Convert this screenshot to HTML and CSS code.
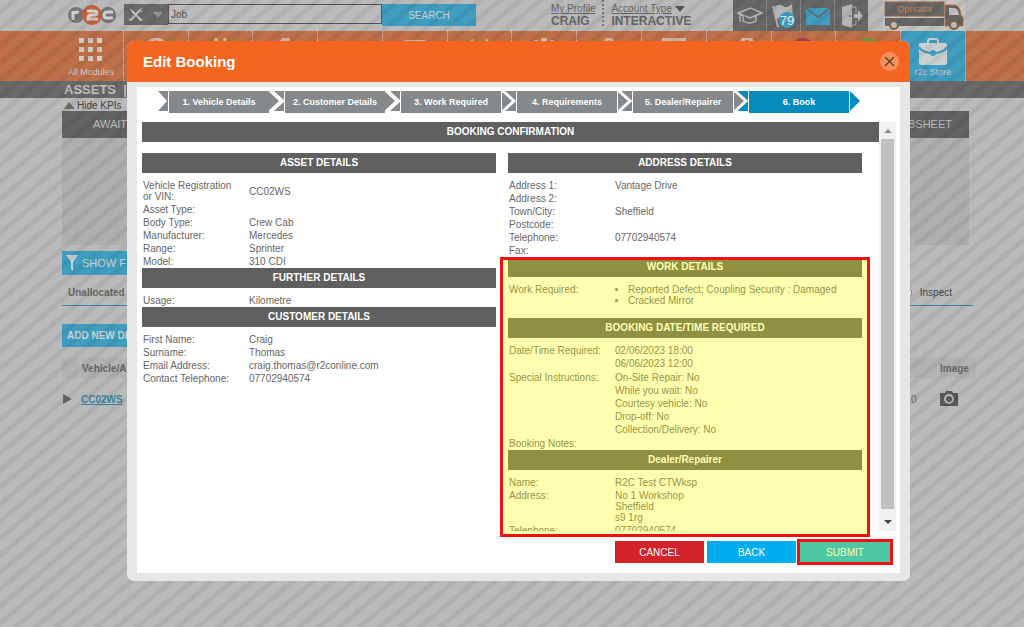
FILE: index.html
```html
<!DOCTYPE html>
<html lang="en">
<head>
  <meta charset="UTF-8">
  <meta name="viewport" content="width=device-width, initial-scale=1.0">
  <title>Edit Booking</title>
  <link rel="stylesheet" href="styles.css">
</head>
<body>

  <div class="page">
    <header class="topbar">
      <svg class="logo" width="50" height="20" viewBox="0 0 50 20">
        <circle cx="9" cy="10" r="8" fill="#777"/>
        <circle cx="41" cy="10" r="8" fill="#777"/>
        <circle cx="25" cy="10" r="10" fill="#c4623c"/>
        <g fill="none" stroke="#d0d0d0" stroke-width="3">
          <path d="M6 15V6M6 10q1-3 6-3"/>
          <path d="M20 6h7q3 0 3 2t-3 2h-3q-3 0-3 3v1h10"/>
          <path d="M46 7h-6q-3 0-3 3t3 3h6"/>
        </g>
      </svg>
      <div class="search">
        <button class="tool-btn" aria-label="Search type">
          <svg width="44" height="21" viewBox="0 0 44 21">
            <g fill="none" stroke="#c4c4c4">
              <path d="M8 7l9 9" stroke-width="2"/>
              <path d="M16 6l-9 10" stroke-width="2"/>
              <path d="M6 5l3 3M18 4l-3 3 2 1 2-2M6 14l-1 2 2 1 2-2M15 15l2 2 2-2"/>
            </g>
            <path d="M29 8h10l-5 6z" fill="#999"/>
          </svg>
        </button>
        <input class="search-input" type="text" value="Job" aria-label="Search">
        <button class="search-btn">SEARCH</button>
      </div>
      <div class="account">
        <div class="account-item">
          <a href="#">My Profile</a>
          <strong>CRAIG</strong>
        </div>
        <div class="account-item type">
          <span><a href="#">Account Type</a> <svg width="10" height="6" viewBox="0 0 10 6"><path d="M0 0h10L5 6z" fill="#555"/></svg></span>
          <strong>INTERACTIVE</strong>
        </div>
      </div>
      <nav class="shortcuts">
        <a href="#" aria-label="Training">
          <svg width="26" height="18" viewBox="0 0 26 18" fill="none" stroke="#b5b5b5" stroke-width="1.5">
            <path d="M1 6l13-5 11 5-12 5zM6 9v5q6 4 13 0V9M3 7v8"/>
          </svg>
        </a>
        <a href="#" aria-label="Notifications">
          <svg width="24" height="26" viewBox="0 0 24 26">
            <path d="M1 3l5 21" stroke="#b5b5b5" stroke-width="2"/>
            <path d="M2 4q5-4 9-1t9-2l1 14q-6 3-9 1t-7 0z" fill="#b5b5b5"/>
            <circle cx="15" cy="17" r="8" fill="#3f9dc0"/>
            <text x="15" y="22" text-anchor="middle" font-size="13" fill="#eee">79</text>
          </svg>
        </a>
        <a href="#" aria-label="Messages">
          <svg width="24" height="18" viewBox="0 0 24 18">
            <path d="M0 1h24v17H0z" fill="#3f9dc0"/>
            <path d="M0 1l12 9L24 1" fill="none" stroke="#676767" stroke-width="1.5"/>
          </svg>
        </a>
        <a href="#" aria-label="Log out">
          <svg width="22" height="24" viewBox="0 0 22 24">
            <path d="M1 3l10-3v24L1 21z" fill="#b5b5b5"/>
            <path d="M11 3h4v6M15 16v5h-4" fill="none" stroke="#b5b5b5"/>
            <path d="M13 10h4V6l5 6-5 6v-4h-4z" fill="#b5b5b5"/>
            <circle cx="9" cy="12" r="1" fill="#666"/>
          </svg>
        </a>
      </nav>
      <svg class="truck" width="82" height="31" viewBox="0 0 82 31">
        <path d="M0 0h82v31H0z" fill="#c6c3c0"/>
        <path d="M2 2h59v14H2zM2 18h59v8H2z" fill="#666"/>
        <path d="M2 2h59v14H2z" fill="none" stroke="#9a6444"/>
        <path d="M62 26V5h10q5 1 6 10l2 3v8z" fill="#666" stroke="#b06a45"/>
        <path d="M66 8h6q3 1 4 7H66z" fill="#c6c3c0"/>
        <g fill="#c6c3c0" stroke="#80604f" stroke-width="2">
          <circle cx="11" cy="25" r="4"/>
          <circle cx="71" cy="25" r="4"/>
        </g>
        <text x="32" y="12" text-anchor="middle" font-size="9" fill="#d0804f">Operator</text>
      </svg>
    </header>

    <nav class="modules">
      <a href="#" class="module">
        <svg width="24" height="24" viewBox="0 0 24 24" fill="#d2cbc6">
          <path d="M0 0h5v5H0zM9 0h5v5H9zM18 0h5v5h-5zM0 9h5v5H0zM9 9h5v5H9zM18 9h5v5h-5zM0 18h5v5H0zM9 18h5v5H9zM18 18h5v5h-5z"/>
        </svg>
        <span>All Modules</span>
      </a>
      <a href="#" class="module" aria-label="Dashboard"><svg width="24" height="24" viewBox="0 0 24 24"><circle cx="12" cy="12" r="11" fill="none" stroke="#cdb5a8" stroke-width="3"/></svg></a>
      <a href="#" class="module" aria-label="Connections"><svg width="24" height="24" viewBox="0 0 24 24"><path d="M8 0v12h9V0" fill="none" stroke="#cdb5a8" stroke-width="3"/></svg></a>
      <a href="#" class="module" aria-label="Fuel"><svg width="24" height="24" viewBox="0 0 24 24"><path d="M7 3q2-4 5-3h5v6l-7 6z" fill="#cdb5a8"/></svg></a>
      <a href="#" class="module" aria-label="Reports"><svg width="24" height="24" viewBox="0 0 24 24"><path d="M4 3h9v20H4z" fill="#cdb5a8"/></svg></a>
      <a href="#" class="module" aria-label="Vehicles"><svg width="24" height="24" viewBox="0 0 24 24"><rect x="1" y="2" width="22" height="16" rx="2" fill="#cdb5a8"/></svg></a>
      <a href="#" class="module" aria-label="Maintenance"><svg width="24" height="24" viewBox="0 0 24 24"><path d="M3 2l16 18M20 2L4 20" stroke="#cdb5a8" stroke-width="4"/></svg></a>
      <a href="#" class="module" aria-label="Engine"><svg width="24" height="24" viewBox="0 0 24 24"><path d="M2 2h4v2h3V0h6v4h3V2h4v18H2z" fill="#cdb5a8"/></svg></a>
      <a href="#" class="module" aria-label="Location"><svg width="24" height="24" viewBox="0 0 24 24"><circle cx="12" cy="5" r="4" fill="none" stroke="#cdb5a8" stroke-width="3"/></svg></a>
      <a href="#" class="module" aria-label="Documents"><svg width="24" height="24" viewBox="0 0 24 24"><path d="M0 0h24v8h-4v12H5V6H0z" fill="#cdb5a8"/></svg></a>
      <a href="#" class="module" aria-label="Users"><svg width="36" height="24" viewBox="0 0 36 24"><circle cx="26" cy="5" r="7" fill="#cdb5a8"/><path d="M4 5q8-4 14 0v14H4z" fill="#c09a86"/><circle cx="26" cy="5" r="3" fill="#aa765c"/></svg></a>
      <a href="#" class="module" aria-label="Alerts"><svg width="24" height="24" viewBox="0 0 24 24"><circle cx="12" cy="12" r="12" fill="#a64040"/></svg></a>
      <a href="#" class="module" aria-label="Approvals"><svg width="24" height="24" viewBox="0 0 24 24"><circle cx="12" cy="12" r="12" fill="#52a04e"/></svg></a>
      <a href="#" class="module store">
        <svg width="28" height="28" viewBox="0 0 28 28">
          <path d="M9 6V3q0-2 2-2h6q2 0 2 2v3" fill="none" stroke="#cdd0d0" stroke-width="2"/>
          <rect y="5" width="28" height="22" rx="2" fill="#cdd0d0"/>
          <path d="M0 9q3 6 14 6t14-6" fill="none" stroke="#3f9dc0" stroke-width="2"/>
          <circle cx="14" cy="15" r="3" fill="#3f9dc0"/>
        </svg>
        <span>r2c Store</span>
      </a>
    </nav>

    <h1 class="page-title">ASSETS &nbsp;|</h1>

    <main class="assets">
      <a href="#" class="hide-kpis"><svg width="11" height="7" viewBox="0 0 11 7"><path d="M0 7L5 0l6 7z" fill="#6c6c6c"/></svg> Hide KPIs</a>
      <section class="kpis">
        <div class="kpi-head"><span>AWAITING</span><span>JOBSHEET</span></div>
      </section>
      <button class="blue-btn filter-btn">
        <svg width="12" height="16" viewBox="0 0 12 16"><path d="M0 0h12L7 7v9l-2-2V7z" fill="#c8d0d2"/></svg>
        SHOW FILTERS
      </button>
      <div class="tabs">
        <strong>Unallocated</strong>
        <label><input type="radio" name="view"> Inspect</label>
      </div>
      <button class="blue-btn add-btn">ADD NEW DEFECT</button>
      <table class="asset-table">
        <tr><th class="expand"></th><th class="vehicle">Vehicle/Asset</th><th class="count"></th><th class="image">Image</th></tr>
        <tr>
          <td><svg width="9" height="10" viewBox="0 0 9 10"><path d="M0 0l9 5-9 5z" fill="#666"/></svg></td>
          <td class="asset-link"><a href="#">CC02WS</a></td>
          <td class="count">0</td>
          <td>
            <svg width="18" height="16" viewBox="0 0 18 16">
              <path d="M0 2h5l1-2h6l1 2h5v13H0z" fill="#585858"/>
              <circle cx="9" cy="8" r="4" fill="none" stroke="#b5b5b5" stroke-width="2"/>
            </svg>
          </td>
        </tr>
      </table>
    </main>
  </div>

  <div class="overlay">
    <div class="modal" role="dialog" aria-labelledby="modal-title">
      <div class="modal-header">
        <h2 id="modal-title">Edit Booking</h2>
        <button class="close-btn" aria-label="Close">
          <svg width="11" height="11" viewBox="0 0 11 11"><path d="M1 1l9 9M10 1l-9 9" stroke="#5c3420" stroke-width="1.2"/></svg>
        </button>
      </div>
      <div class="modal-body">
        <div class="modal-panel">
          <ol class="steps">
            <li>
              <svg width="11" height="22" viewBox="0 0 11 22"><path d="M0 0h10v20H0l9-10z" fill="#86898b"/></svg>
              <span>1. Vehicle Details</span>
            </li>
            <li>
              <svg width="16" height="22" viewBox="0 0 16 22"><path d="M0 0h15v20H0z" fill="#86898b"/><path d="M1-1l12 11L1 21" fill="none" stroke="#fff" stroke-width="4"/></svg>
              <span>2. Customer Details</span>
            </li>
            <li>
              <svg width="16" height="22" viewBox="0 0 16 22"><path d="M0 0h15v20H0z" fill="#86898b"/><path d="M1-1l12 11L1 21" fill="none" stroke="#fff" stroke-width="4"/></svg>
              <span>3. Work Required</span>
            </li>
            <li>
              <svg width="16" height="22" viewBox="0 0 16 22"><path d="M1 0h14v20H1z" fill="#86898b"/><path d="M1-1l12 11L1 21" fill="none" stroke="#fff" stroke-width="3"/></svg>
              <span>4. Requirements</span>
            </li>
            <li>
              <svg width="16" height="22" viewBox="0 0 16 22"><path d="M1 0h14v20H1z" fill="#86898b"/><path d="M1-1l12 11L1 21" fill="none" stroke="#fff" stroke-width="3"/></svg>
              <span>5. Dealer/Repairer</span>
            </li>
            <li class="current">
              <svg width="16" height="22" viewBox="0 0 16 22"><path d="M5 0h10v20H5z" fill="#068bbf"/><path d="M1 0l12 10L1 20z" fill="#86898b"/><path d="M1-1l12 11L1 21" fill="none" stroke="#fff" stroke-width="3"/></svg>
              <span>6. Book</span>
              <svg width="11" height="22" viewBox="0 0 11 22"><path d="M1 0l10 10L1 20z" fill="#068bbf"/></svg>
            </li>
          </ol>

          <div class="scroll-area">
            <div class="scroll-content">
              <h3 class="bar">BOOKING CONFIRMATION</h3>
              <div class="columns">
                <div class="column">
                  <h3 class="bar">ASSET DETAILS</h3>
                  <table class="details">
                    <tr><th>Vehicle Registration or VIN:</th><td class="middle">CC02WS</td></tr>
                    <tr><th>Asset Type:</th><td></td></tr>
                    <tr><th>Body Type:</th><td>Crew Cab</td></tr>
                    <tr><th>Manufacturer:</th><td>Mercedes</td></tr>
                    <tr><th>Range:</th><td>Sprinter</td></tr>
                    <tr><th>Model:</th><td>310 CDI</td></tr>
                  </table>
                  <h3 class="bar">FURTHER DETAILS</h3>
                  <table class="details">
                    <tr><th>Usage:</th><td>Kilometre</td></tr>
                  </table>
                  <h3 class="bar">CUSTOMER DETAILS</h3>
                  <table class="details">
                    <tr><th>First Name:</th><td>Craig</td></tr>
                    <tr><th>Surname:</th><td>Thomas</td></tr>
                    <tr><th>Email Address:</th><td>craig.thomas@r2conline.com</td></tr>
                    <tr><th>Contact Telephone:</th><td>07702940574</td></tr>
                  </table>
                </div>
                <div class="column">
                  <h3 class="bar">ADDRESS DETAILS</h3>
                  <table class="details">
                    <tr><th>Address 1:</th><td>Vantage Drive</td></tr>
                    <tr><th>Address 2:</th><td></td></tr>
                    <tr><th>Town/City:</th><td>Sheffield</td></tr>
                    <tr><th>Postcode:</th><td></td></tr>
                    <tr><th>Telephone:</th><td>07702940574</td></tr>
                    <tr><th>Fax:</th><td></td></tr>
                  </table>
                  <h3 class="bar">WORK DETAILS</h3>
                  <table class="details work">
                    <tr><th>Work Required:</th><td><ul><li>Reported Defect; Coupling Security : Damaged</li><li>Cracked Mirror</li></ul></td></tr>
                  </table>
                  <h3 class="bar">BOOKING DATE/TIME REQUIRED</h3>
                  <table class="details">
                    <tr><th>Date/Time Required:</th><td class="lines">02/06/2023 18:00<br>06/06/2023 12:00</td></tr>
                    <tr><th>Special Instructions:</th><td class="lines">On-Site Repair: No<br>While you wait: No<br>Courtesy vehicle: No<br>Drop-off: No<br>Collection/Delivery: No</td></tr>
                    <tr><th>Booking Notes:</th><td></td></tr>
                  </table>
                  <h3 class="bar">Dealer/Repairer</h3>
                  <table class="details">
                    <tr><th>Name:</th><td>R2C Test CTWksp</td></tr>
                    <tr><th>Address:</th><td>No 1 Workshop<br>Sheffield<br>s9 1rg</td></tr>
                    <tr><th>Telephone:</th><td>07702940574</td></tr>
                  </table>
                </div>
              </div>
            </div>
            <div class="scrollbar">
              <svg width="17" height="17" viewBox="0 0 17 17"><path d="M5 11l4-4 4 4z" fill="#8f8f8f"/></svg>
              <div class="thumb"></div>
              <svg width="17" height="17" viewBox="0 0 17 17"><path d="M5 6h8l-4 4z" fill="#444"/></svg>
            </div>
          </div>

          <div class="actions">
            <button class="cancel">CANCEL</button>
            <button>BACK</button>
            <div class="submit-wrap"><button>SUBMIT</button><div class="mark"></div></div>
          </div>
          <div class="mark details-mark"></div>
        </div>
      </div>
    </div>
  </div>

</body>
</html>
```
FILE: styles.css
```css
* { box-sizing: border-box; }
body {
  margin: 0;
  font-family: "Liberation Sans", Arial, sans-serif;
  font-size: 10px;
  color: #666;
  background-color: #bababa;
  overflow: hidden;
}
button, input { font-family: inherit; font-size: inherit; }
button { border: none; padding: 0; cursor: pointer; }
h1, h2, h3, ul, ol { margin: 0; padding: 0; }
svg { display: block; }
.page { min-height: 100vh; }

/* Top bar */
.topbar {
  display: flex;
  height: 31px;
  padding-right: 59px;
  padding-left: 67px;
}
.logo { margin-top: 5px; }
.search {
  display: flex;
  margin: 4px 75px 0 7px;
  height: 22px;
}
.tool-btn {
  width: 44px;
  height: 21px;
  background-color: #696969;
}
.search-input {
  width: 214px;
  height: 20px;
  padding: 0 2px;
  border: 1px solid #555;
  background-color: #bcbcbc;
  color: #555;
}
.search-btn {
  width: 94px;
  background-color: #3f9dc0;
  color: #c8d3d6;
}
.account { display: flex; flex: 1; }
.account-item { padding-top: 3px; line-height: 12px; }
.account-item span { display: flex; gap: 3px; align-items: center; }
.account-item a { color: #666; }
.account-item strong { display: block; font-size: 12px; }
.account-item.type {
  margin-left: 7px;
  padding-left: 7px;
  border-left: 2px dotted #777;
  height: 26px;
}
.shortcuts {
  display: flex;
  width: 135px;
  margin-right: 15px;
  background-color: #676767;
}
.shortcuts a {
  display: flex;
  flex: 1;
  align-items: center;
  justify-content: center;
}
.shortcuts a + a { border-left: 1px dotted #a0a0a0; }

/* Modules */
.modules {
  display: flex;
  height: 50px;
  padding: 0 58px 0 59px;
  background-color: #bd7049;
}
.module {
  display: flex;
  flex: 1;
  flex-direction: column;
  align-items: center;
  justify-content: space-between;
  padding: 7px 0 4px;
  border-right: 1px dotted #d8c4b8;
  color: #d2cbc6;
  font-size: 9px;
  text-decoration: none;
  white-space: nowrap;
}
.module.store { background-color: #3f9dc0; }

.page-title {
  height: 17px;
  padding-left: 64px;
  background-color: #696969;
  color: #c0c0c0;
  font-size: 13px;
  line-height: 17px;
}

/* Asset list */
.assets {
  display: flex;
  flex-direction: column;
  align-items: flex-start;
  padding: 0 48px 0 62px;
}
.hide-kpis {
  display: flex;
  gap: 2px;
  align-items: center;
  height: 13px;
  padding-top: 2px;
  padding-left: 2px;
  color: #444;
  text-decoration: none;
}
.kpis {
  width: calc(100% - 7px);
  height: 134px;
  background-color: #afafaf;
}
.kpi-head {
  display: flex;
  justify-content: space-between;
  padding: 0 17px 0 31px;
  background-color: #636363;
  color: #bbb;
  font-size: 11px;
  line-height: 27px;
}
.blue-btn {
  display: flex;
  align-items: center;
  width: 120px;
  background-color: #3f9dc0;
  color: #c8d3d6;
  font-weight: bold;
}
.filter-btn {
  gap: 4px;
  height: 24px;
  margin-top: 6px;
  padding-left: 4px;
  font-size: 11px;
  font-weight: normal;
}
.tabs {
  display: flex;
  align-items: center;
  justify-content: space-between;
  width: calc(100% - 3px);
  height: 31px;
  padding: 5px 21px 0 6px;
  border-bottom: 1px solid #2f86a8;
}
.tabs label { display: flex; gap: 8px; align-items: center; color: #444; }
.tabs input { width: 12px; height: 12px; margin: 0; }
.add-btn {
  height: 23px;
  margin-top: 18px;
  padding-left: 5px;
}
.asset-table {
  width: 100%;
  margin-top: 11px;
  border-spacing: 0;
}
.asset-table th {
  height: 20px;
  padding: 0 1px;
  background-color: #b2b2b2;
  border-right: 2px solid #bababa;
  text-align: left;
}
.asset-table td { height: 42px; padding: 0 1px; }
.asset-table .asset-link { padding: 0; }
.asset-table a { color: #3884a0; font-weight: bold; }
.asset-table .expand { width: 19px; }
.asset-table .image { width: 37px; border-right: none; }
.asset-table .count { width: 68px; padding-left: 40px; }

/* Dialog */
.overlay {
  position: absolute;
  inset: 0;
  padding: 41px 114px 46px 127px;
  background: repeating-linear-gradient(140deg, rgba(0, 0, 0, 0) 0, rgba(0, 0, 0, 0) 6px, rgba(0, 0, 0, 0.06) 8px, rgba(0, 0, 0, 0.06) 11px, rgba(0, 0, 0, 0) 13px);
}
.modal {
  display: flex;
  flex-direction: column;
  height: 100%;
  border-radius: 7px;
  background-color: #e7e7e8;
  overflow: hidden;
}
.modal-header {
  display: flex;
  align-items: center;
  justify-content: space-between;
  height: 41px;
  padding: 0 11px 0 16px;
  background-color: #f56522;
  color: #fff;
}
.modal-header h2 { font-size: 15px; }
.close-btn {
  display: flex;
  align-items: center;
  justify-content: center;
  width: 19px;
  height: 19px;
  border-radius: 50%;
  background-color: #f78e5e;
}
.modal-body {
  display: flex;
  flex: 1;
  min-height: 0;
  padding: 5px 10px 8px;
}
.modal-panel {
  position: relative;
  display: flex;
  flex: 1;
  flex-direction: column;
  min-width: 0;
  padding: 4px 4px 10px 5px;
  background-color: #fff;
}
.steps {
  display: flex;
  height: 31px;
  padding-left: 16px;
  list-style: none;
}
.steps li { display: flex; }
.steps span {
  width: 100px;
  height: 22px;
  background-color: #86898b;
  color: #fff;
  font-size: 9px;
  font-weight: bold;
  line-height: 22px;
  text-align: center;
  white-space: nowrap;
}
.steps .current span { background-color: #068bbf; }
.scroll-area {
  display: flex;
  flex: 1;
  min-height: 0;
}
.scroll-content { flex: 1; overflow: hidden; }
.bar {
  height: 20px;
  background-color: #5f5f5f;
  color: #fff;
  font-size: 10px;
  line-height: 20px;
  text-align: center;
}
.columns {
  display: flex;
  gap: 12px;
  margin-top: 11px;
  padding-right: 17px;
}
.column { flex: 1; }
.details {
  width: 100%;
  padding-top: 6px;
  border-spacing: 0;
  line-height: 11px;
}
.details th, .details td {
  padding: 1px;
  text-align: left;
  vertical-align: top;
}
.details th { width: 106px; padding-right: 8px; font-weight: normal; }
.details .middle { vertical-align: middle; }
.details .lines { line-height: 13px; padding: 0 1px 1px; }
.details.work { padding-bottom: 11px; }
.details ul { padding-left: 13px; }
.scrollbar {
  display: flex;
  flex-direction: column;
  width: 17px;
  background-color: #f1f1f1;
}
.thumb { flex: 1; margin: 0 2px; background-color: #c1c1c1; }
.scrollbar svg:last-child { margin-top: 5px; }
.actions {
  display: flex;
  gap: 3px;
  justify-content: flex-end;
  margin-top: 10px;
  padding-right: 8px;
}
.actions button {
  width: 89px;
  height: 22px;
  background-color: #00aeef;
  color: #fff;
}
.actions .cancel { background-color: #d2232a; }
.submit-wrap { position: relative; }
.submit-wrap button { width: 92px; margin-right: -3px; }

/* Highlight frames */
.mark {
  position: absolute;
  inset: -2px -5px -2px -2px;
  border: 3px solid #ee1111;
  background-color: rgba(255, 255, 0, 0.31);
  pointer-events: none;
}
.details-mark {
  inset: 170px 30px 36px auto;
  width: 370px;
}
```
